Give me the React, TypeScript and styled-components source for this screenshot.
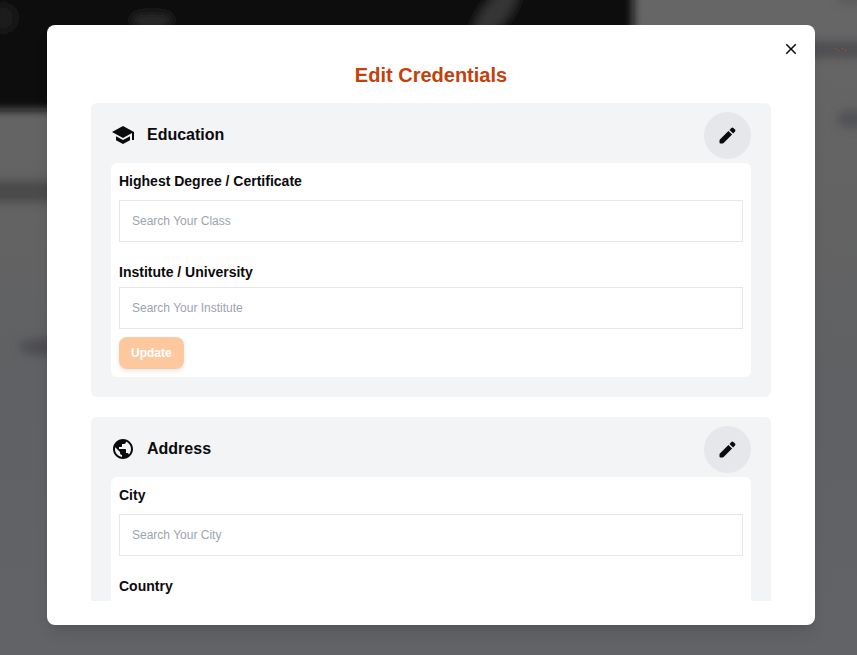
import React, { useId } from 'react';
import styled, { createGlobalStyle } from 'styled-components';
import { MdClose, MdPublic, MdSchool } from 'react-icons/md';

const GlobalStyle = createGlobalStyle`
  *, *::before, *::after { box-sizing: border-box; }
  body {
    margin: 0;
    background: #636466;
    color: #0b0b0d;
    font-family: "Liberation Sans", Arial, sans-serif;
  }
  button, input { font: inherit; color: inherit; }
  h1, h2 { margin: 0; }
`;

const Screen = styled.div`
  position: relative;
  height: 100vh;
  display: flex;
  justify-content: center;
  padding: 25px 42px 30px 47px;
  overflow: hidden;
`;

const Backdrop = styled.svg`
  position: absolute;
  inset: 0;
  width: 100%;
  height: 100%;
`;

const Dialog = styled.section`
  position: relative;
  display: flex;
  flex-direction: column;
  width: 100%;
  max-width: 768px;
  padding: 36px 44px 24px;
  border-radius: 8px;
  background: #fff;
  box-shadow: 0 10px 15px -3px rgba(0, 0, 0, 0.1), 0 4px 6px -4px rgba(0, 0, 0, 0.1);
`;

const CloseButton = styled.button`
  position: absolute;
  top: 12px;
  right: 12px;
  display: grid;
  place-items: center;
  width: 24px;
  height: 24px;
  padding: 0;
  border: 0;
  background: none;
  cursor: pointer;
`;

const Title = styled.h1`
  margin-bottom: 14px;
  color: #c2410c;
  font-size: 20px;
  line-height: 28px;
  font-weight: 600;
  text-align: center;
`;

const Sections = styled.div`
  display: flex;
  flex-direction: column;
  gap: 20px;
  min-height: 0;
  overflow-y: auto;
  scrollbar-width: none;
`;

const Card = styled.section`
  flex: none;
  padding: 8px 20px 20px;
  border-radius: 6px;
  background: #f3f4f6;
`;

const CardHeader = styled.header`
  display: flex;
  align-items: center;
  gap: 12px;
  height: 48px;
  margin-bottom: 4px;
`;

const CardTitle = styled.h2`
  flex: 1;
  font-size: 16px;
  line-height: 24px;
  font-weight: 600;
`;

const EditButton = styled.button`
  display: grid;
  place-items: center;
  width: 47px;
  height: 47px;
  padding: 0;
  border: 0;
  border-radius: 50%;
  background: #e5e7eb;
  cursor: pointer;
`;

const Form = styled.form`
  display: flex;
  flex-direction: column;
  align-items: flex-start;
  padding: 8px;
  border-radius: 6px;
  background: #fff;
`;

const Field = styled.div<{ $gap: number }>`
  display: flex;
  flex-direction: column;
  gap: ${(p) => p.$gap}px;
  width: 100%;
  & + & { margin-top: 20px; }
`;

const Label = styled.label`
  font-size: 14px;
  line-height: 21px;
  font-weight: 600;
`;

const Input = styled.input`
  width: 100%;
  height: 42px;
  padding: 0 12px;
  border: 1px solid #e5e7eb;
  border-radius: 0;
  background: #fff;
  font-size: 12px;
  &::placeholder { color: #9ca3af; opacity: 1; }
`;

const UpdateButton = styled.button`
  height: 32px;
  margin-top: 8px;
  padding: 0 12px;
  border: 0;
  border-radius: 8px;
  background: #fec89f;
  color: #fff;
  font-size: 12px;
  font-weight: 700;
  box-shadow: 0 2px 4px rgba(0, 0, 0, 0.1);
`;

function PencilIcon() {
  return (
    <svg width="17" height="17" viewBox="0 0 17 17" fill="currentColor" aria-hidden="true">
      <path d="M.5 13.2v2.3q0 1 1 1h2.2q.5 0 .9-.4l8.5-8.5-3.7-3.7L.9 12.4q-.4.4-.4.8z" />
      <path d="M10.5 2.9 12.4 1q1-.9 2 0l1.6 1.6q.9 1 0 2l-1.9 1.9z" />
    </svg>
  );
}

function BlurredPage() {
  return (
    <Backdrop viewBox="0 0 857 655" preserveAspectRatio="none" aria-hidden="true">
      <defs>
        <filter id="soft" x="-50%" y="-50%" width="200%" height="200%">
          <feGaussianBlur stdDeviation="5" />
        </filter>
        <linearGradient id="page" x1="0" y1="0" x2="0" y2="1">
          <stop offset="0" stopColor="#666666" />
          <stop offset="0.3" stopColor="#636363" />
          <stop offset="0.6" stopColor="#606164" />
          <stop offset="1" stopColor="#626366" />
        </linearGradient>
      </defs>
      <rect width="857" height="655" fill="url(#page)" />
      <g filter="url(#soft)">
        <rect x="-30" y="-30" width="663" height="140" fill="#0b0b0b" />
        <rect x="-30" y="181" width="90" height="21" fill="#48494a" />
        <ellipse cx="45" cy="347" rx="26" ry="9" fill="#4d4e51" />
        <rect x="805" y="41" width="82" height="17" fill="#505052" />
        <ellipse cx="853" cy="119" rx="16" ry="9" fill="#505156" />
        <ellipse cx="850" cy="-2" rx="14" ry="5" fill="#55565a" />
        <path d="M472 32Q482 2 504-12h16Q514 18 492 32z" fill="#343434" />
        <ellipse cx="152" cy="20" rx="20" ry="8" fill="#2c2c2c" />
        <ellipse cx="4" cy="18" rx="12" ry="14" fill="#1c1c1c" />
        <path d="M60-20h370v36H60z" fill="#161616" opacity="0.6" />
      </g>
      <g fill="#cf480f">
        <path d="M835 48h1v1h-1zM838 50h1v1h-1zM842 48h1v1h-1zM845 50h1v1h-1zM832 60h1v1h-1zM840 60h1v1h-1z" />
      </g>
    </Backdrop>
  );
}

function TextField({ label, placeholder, gap }: { label: string; placeholder: string; gap: number }) {
  const id = useId();
  return (
    <Field $gap={gap}>
      <Label htmlFor={id}>{label}</Label>
      <Input id={id} type="text" placeholder={placeholder} />
    </Field>
  );
}

function CredentialCard({ title, icon, children }: { title: string; icon: React.ReactNode; children: React.ReactNode }) {
  return (
    <Card>
      <CardHeader>
        {icon}
        <CardTitle>{title}</CardTitle>
        <EditButton type="button" aria-label={`Edit ${title}`}>
          <PencilIcon />
        </EditButton>
      </CardHeader>
      <Form onSubmit={(e) => e.preventDefault()}>
        {children}
      </Form>
    </Card>
  );
}

export default function App() {
  return (
    <>
      <GlobalStyle />
      <Screen>
        <BlurredPage />
        <Dialog role="dialog" aria-modal="true" aria-labelledby="dialog-title">
          <CloseButton type="button" aria-label="Close">
            <MdClose size={18} />
          </CloseButton>
          <Title id="dialog-title">Edit Credentials</Title>
          <Sections>
            <CredentialCard title="Education" icon={<MdSchool size={24} />}>
              <TextField label="Highest Degree / Certificate" placeholder="Search Your Class" gap={8} />
              <TextField label="Institute / University" placeholder="Search Your Institute" gap={4} />
              <UpdateButton type="submit">Update</UpdateButton>
            </CredentialCard>
            <CredentialCard title="Address" icon={<MdPublic size={24} />}>
              <TextField label="City" placeholder="Search Your City" gap={8} />
              <TextField label="Country" placeholder="Search Your Country" gap={4} />
            </CredentialCard>
          </Sections>
        </Dialog>
      </Screen>
    </>
  );
}
